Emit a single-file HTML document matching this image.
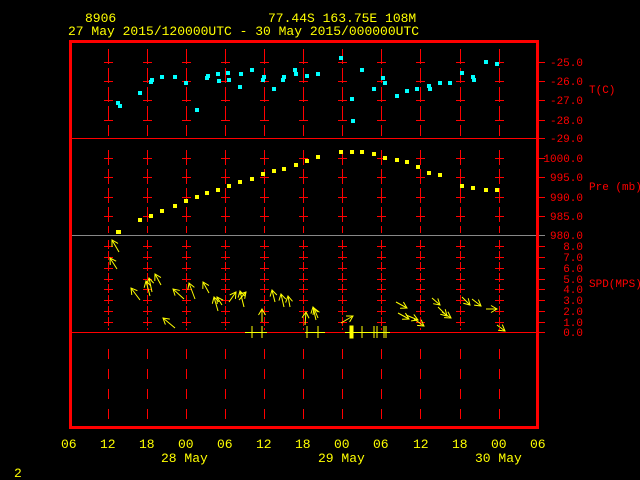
<!DOCTYPE html>
<html><head><meta charset="utf-8"><style>
html,body{margin:0;padding:0;background:#000;width:640px;height:480px;overflow:hidden}
svg{display:block}
text{font-family:"Liberation Mono","DejaVu Sans Mono",monospace}
</style></head><body>
<svg width="640" height="480" viewBox="0 0 640 480" xmlns="http://www.w3.org/2000/svg">
<defs>
<marker id="ah" markerWidth="8" markerHeight="8" refX="7" refY="4" orient="auto" markerUnits="userSpaceOnUse">
<polyline points="1,0.5 7,4 1,7.5" fill="none" stroke="#ff0" stroke-width="1"/>
</marker>
</defs>
<g fill="#ff0" font-size="13">
<text x="85" y="22">8906</text>
<text x="268" y="22">77.44S  163.75E   108M</text>
<text x="68" y="35">27 May 2015/120000UTC - 30 May 2015/000000UTC</text>
<text x="61" y="448">06</text><text x="100" y="448">12</text><text x="139" y="448">18</text><text x="178" y="448">00</text><text x="217" y="448">06</text><text x="256" y="448">12</text><text x="295" y="448">18</text><text x="334" y="448">00</text><text x="373" y="448">06</text><text x="413" y="448">12</text><text x="452" y="448">18</text><text x="491" y="448">00</text><text x="530" y="448">06</text>
<text x="161" y="462">28 May</text><text x="318" y="462">29 May</text><text x="475" y="462">30 May</text>
<text x="14" y="477">2</text>
</g>
<!-- vertical dashed grid -->
<g stroke="#f00" stroke-width="1" id="vg">
<line x1="108.5" y1="49" x2="108.5" y2="136" stroke-dasharray="15,4"/>
<line x1="108.5" y1="150" x2="108.5" y2="233" stroke-dasharray="15,4"/>
<line x1="108.5" y1="240" x2="108.5" y2="330" stroke-dasharray="9,2"/>
<line x1="108.5" y1="349" x2="108.5" y2="420" stroke-dasharray="10,10"/>
</g>
<use href="#vg" x="39"/><use href="#vg" x="78"/><use href="#vg" x="117"/><use href="#vg" x="156"/><use href="#vg" x="195"/><use href="#vg" x="234"/><use href="#vg" x="273"/><use href="#vg" x="312"/><use href="#vg" x="352"/><use href="#vg" x="391"/>
<g stroke="#f00" stroke-width="1" id="tk">
<path d="M104 62.5h9M104 81.5h9M104 100.5h9M104 120.5h9M104 158.5h9M104 177.5h9M104 197.5h9M104 216.5h9M104 246.5h9M104 257.5h9M104 268.5h9M104 279.5h9M104 289.5h9M104 300.5h9M104 311.5h9M104 322.5h9"/>
</g>
<use href="#tk" x="39"/><use href="#tk" x="78"/><use href="#tk" x="117"/><use href="#tk" x="156"/><use href="#tk" x="195"/><use href="#tk" x="234"/><use href="#tk" x="273"/><use href="#tk" x="312"/><use href="#tk" x="352"/><use href="#tk" x="391"/><use href="#tk" x="432"/>
<line x1="70" y1="138.5" x2="545" y2="138.5" stroke="#f00" stroke-width="1"/>
<line x1="70" y1="235.5" x2="545" y2="235.5" stroke="#888" stroke-width="1"/>
<line x1="70" y1="332.5" x2="545" y2="332.5" stroke="#f00" stroke-width="1"/>
<rect x="70.5" y="41.5" width="467" height="386" fill="none" stroke="#f00" stroke-width="3"/>
<g fill="#f00" font-size="11" text-anchor="end">
<text x="583" y="66">-25.0</text><text x="583" y="85">-26.0</text><text x="583" y="104">-27.0</text><text x="583" y="124">-28.0</text><text x="583" y="142">-29.0</text>
<text x="583" y="162">1000.0</text><text x="583" y="181">995.0</text><text x="583" y="201">990.0</text><text x="583" y="220">985.0</text><text x="583" y="239">980.0</text>
<text x="583" y="250">8.0</text><text x="583" y="261">7.0</text><text x="583" y="272">6.0</text><text x="583" y="283">5.0</text><text x="583" y="293">4.0</text><text x="583" y="304">3.0</text><text x="583" y="315">2.0</text><text x="583" y="326">1.0</text><text x="583" y="336">0.0</text>
</g>
<g fill="#f00" font-size="11">
<text x="589" y="93">T(C)</text><text x="589" y="190">Pre (mb)</text><text x="589" y="287">SPD(MPS)</text>
</g>
<g fill="#0ff">
<rect x="116" y="101" width="4" height="4"/><rect x="118" y="104" width="4" height="4"/><rect x="138" y="91" width="4" height="4"/><rect x="149" y="80" width="4" height="4"/><rect x="150" y="78" width="4" height="4"/><rect x="160" y="75" width="4" height="4"/><rect x="173" y="75" width="4" height="4"/><rect x="184" y="81" width="4" height="4"/><rect x="195" y="108" width="4" height="4"/><rect x="205" y="76" width="4" height="4"/><rect x="206" y="74" width="4" height="4"/><rect x="216" y="72" width="4" height="4"/><rect x="217" y="79" width="4" height="4"/><rect x="226" y="71" width="4" height="4"/><rect x="227" y="78" width="4" height="4"/><rect x="238" y="85" width="4" height="4"/><rect x="239" y="72" width="4" height="4"/><rect x="250" y="68" width="4" height="4"/><rect x="261" y="78" width="4" height="4"/><rect x="262" y="75" width="4" height="4"/><rect x="272" y="87" width="4" height="4"/><rect x="282" y="75" width="4" height="4"/><rect x="281" y="78" width="4" height="4"/><rect x="293" y="68" width="4" height="4"/><rect x="294" y="72" width="4" height="4"/><rect x="305" y="74" width="4" height="4"/><rect x="316" y="72" width="4" height="4"/><rect x="339" y="56" width="4" height="4"/><rect x="350" y="97" width="4" height="4"/><rect x="351" y="119" width="4" height="4"/><rect x="360" y="68" width="4" height="4"/><rect x="372" y="87" width="4" height="4"/><rect x="381" y="76" width="4" height="4"/><rect x="383" y="81" width="4" height="4"/><rect x="395" y="94" width="4" height="4"/><rect x="405" y="89" width="4" height="4"/><rect x="415" y="87" width="4" height="4"/><rect x="427" y="84" width="4" height="4"/><rect x="428" y="87" width="4" height="4"/><rect x="438" y="81" width="4" height="4"/><rect x="448" y="81" width="4" height="4"/><rect x="460" y="71" width="4" height="4"/><rect x="471" y="75" width="4" height="4"/><rect x="472" y="78" width="4" height="4"/><rect x="484" y="60" width="4" height="4"/><rect x="495" y="62" width="4" height="4"/>
</g>
<g fill="#ff0">
<rect x="116" y="230" width="5" height="4"/><rect x="138" y="218" width="4" height="4"/><rect x="149" y="214" width="4" height="4"/><rect x="160" y="209" width="4" height="4"/><rect x="173" y="204" width="4" height="4"/><rect x="184" y="199" width="4" height="4"/><rect x="195" y="195" width="4" height="4"/><rect x="205" y="191" width="4" height="4"/><rect x="216" y="188" width="4" height="4"/><rect x="227" y="184" width="4" height="4"/><rect x="238" y="180" width="4" height="4"/><rect x="250" y="177" width="4" height="4"/><rect x="261" y="172" width="4" height="4"/><rect x="272" y="169" width="4" height="4"/><rect x="282" y="167" width="4" height="4"/><rect x="294" y="163" width="4" height="4"/><rect x="305" y="159" width="4" height="4"/><rect x="316" y="155" width="4" height="4"/><rect x="339" y="150" width="4" height="4"/><rect x="350" y="150" width="4" height="4"/><rect x="360" y="150" width="4" height="4"/><rect x="372" y="152" width="4" height="4"/><rect x="383" y="156" width="4" height="4"/><rect x="395" y="158" width="4" height="4"/><rect x="405" y="160" width="4" height="4"/><rect x="416" y="165" width="4" height="4"/><rect x="427" y="171" width="4" height="4"/><rect x="438" y="173" width="4" height="4"/><rect x="460" y="184" width="4" height="4"/><rect x="471" y="186" width="4" height="4"/><rect x="484" y="188" width="4" height="4"/><rect x="495" y="188" width="4" height="4"/>
</g>
<g stroke="#ff0" stroke-width="1" fill="none" marker-end="url(#ah)">
<line x1="119" y1="252" x2="112" y2="240"/><line x1="117" y1="269" x2="110" y2="258"/>
<line x1="140" y1="300" x2="131" y2="288"/><line x1="150" y1="296" x2="146" y2="281"/><line x1="152" y1="292" x2="149" y2="278"/><line x1="161" y1="285" x2="155" y2="274"/>
<line x1="175" y1="328" x2="163" y2="318"/><line x1="184" y1="299" x2="173" y2="289"/><line x1="195" y1="299" x2="189" y2="283"/>
<line x1="209" y1="293" x2="203" y2="282"/><line x1="218" y1="311" x2="214" y2="297"/><line x1="222" y1="305" x2="217" y2="297"/>
<line x1="229" y1="302" x2="236" y2="292"/><line x1="239" y1="300" x2="246" y2="292"/><line x1="244" y1="307" x2="240" y2="291"/>
<line x1="262" y1="322" x2="262" y2="309"/><line x1="275" y1="302" x2="272" y2="290"/><line x1="284" y1="307" x2="281" y2="294"/><line x1="290" y1="307" x2="288" y2="296"/>
<line x1="305" y1="325" x2="306" y2="312"/><line x1="316" y1="320" x2="313" y2="307"/><line x1="318" y1="318" x2="314" y2="308"/>
<line x1="341" y1="323" x2="353" y2="316"/>
<line x1="396" y1="302" x2="407" y2="308"/><line x1="398" y1="313" x2="409" y2="319"/><line x1="406" y1="315" x2="418" y2="320"/><line x1="414" y1="319" x2="424" y2="326"/>
<line x1="432" y1="298" x2="440" y2="305"/><line x1="438" y1="307" x2="447" y2="316"/><line x1="442" y1="312" x2="451" y2="318"/>
<line x1="462" y1="297" x2="470" y2="305"/><line x1="472" y1="299" x2="481" y2="306"/><line x1="486" y1="309" x2="497" y2="309"/><line x1="497" y1="325" x2="505" y2="331"/>
</g>
<g stroke="#ff0" stroke-width="1">
<path d="M245 332.5h22M252 326v12M262 326v12M305 332.5h20M307 326v12M318 326v12M345 332.5h45M362 326v12M374 326v12M377 326v12M384 326v12M386 326v12"/>
<rect x="350" y="326" width="3" height="12" fill="#ff0"/>
</g>
</svg>
</body></html>
